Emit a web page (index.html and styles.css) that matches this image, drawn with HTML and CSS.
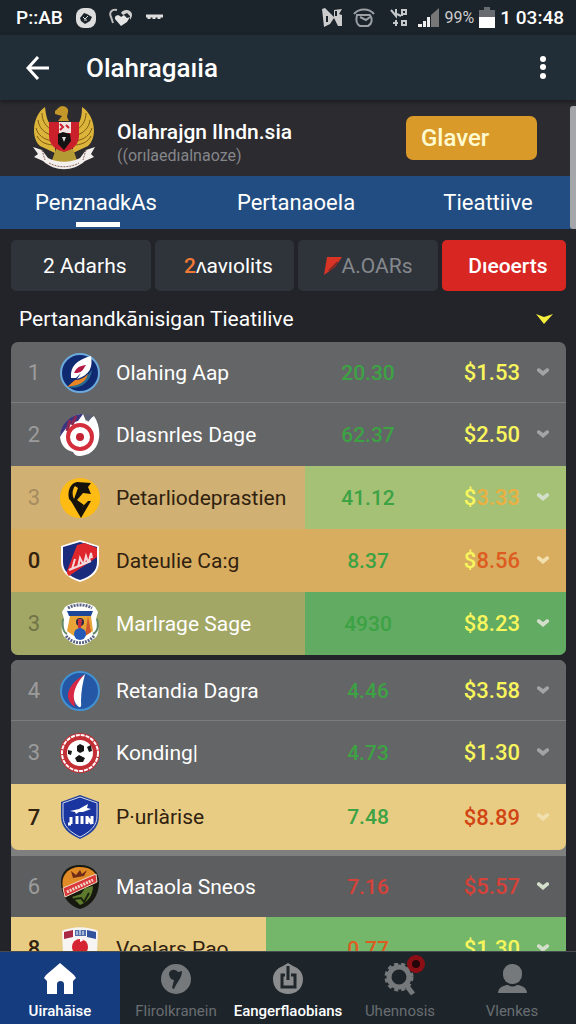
FILE: index.html
```html
<!DOCTYPE html>
<html lang="id">
<head>
    <meta charset="UTF-8">
    <meta name="viewport" content="width=device-width, initial-scale=1.0">
    <title>Olahragaıia</title>
    <link rel="stylesheet" href="styles.css">
</head>
<body>
    <div class="status-bar">
        <span class="status-clock">P::AB</span>
        <svg width="20" height="20" viewBox="0 0 20 20"><rect width="20" height="20" rx="8" fill="#ddd"/><path d="M4 10l4-5 3 1 5 3-2 4-5 3-4-3z" fill="#1c242b"/><path d="M7 9l2 2 3-3M8 12h3" stroke="#ddd" fill="none"/></svg>
        <svg width="24" height="20" viewBox="0 0 24 20"><path d="M8 2C2 1 0 5 2 9l2 6" stroke="#bbb" stroke-width="2" fill="none"/><path d="M12 18L6 11c-1-4 4-5 6-2l3-2 3 3 3-1-3 5z" fill="#e4e4e4"/><path d="M12 5c3-5 11-3 11 2 0 2-1 3-2 5V8l-3-3-4 2z" fill="#d0d0d0"/></svg>
        <svg width="17" height="8" viewBox="0 0 17 8"><path d="M0 2h17M3 2v3M8 2v3M13 2v3" stroke="#ddd" stroke-width="3" fill="none"/></svg>
        <div class="status-right">
            <svg width="21" height="20" viewBox="0 0 21 20"><path d="M0 1l3-1 9 9V2l8-1-3 5 3 1v11h-4l-4-8-4 6-6 3z" fill="#ccc"/><path d="M5 8v6M14 8V3" stroke="#1c242b" stroke-width="2"/></svg>
            <svg class="status-gap" width="22" height="20" viewBox="0 0 22 20"><path d="M1 6c5-6 15-6 20 0M4 7h13c3 4 2 9-2 11H7c-4-2-4-7-3-11zM7 9l6 3 4-3" stroke="#9a9fa3" stroke-width="2" fill="none"/></svg>
            <svg class="status-gap" width="18" height="20" viewBox="0 0 18 20"><path d="M1 2l5 6V1M7 6l4 2M12 1v7M12 2h4v4h-4M6 12v6M3 15h5M12 13v4h4v-4z" stroke="#c5c8ca" stroke-width="2" fill="none"/></svg>
            <svg width="22" height="20" viewBox="0 0 22 20"><path d="M0 19h4v-3H0zM5 19h3v-6H5zM9 19h3V9H9z" fill="#eee"/><path d="M13 19V7l8-7v19z" fill="#777"/></svg>
            <span class="status-percent">99%</span>
            <svg width="16" height="21" viewBox="0 0 16 21"><path d="M5 0h6v3h5v7H0V3h5z" fill="#686c70"/><path d="M0 10h16v11H0z" fill="#fff"/></svg>
            <span class="status-clock">1 03:48</span>
        </div>
    </div>

    <header class="app-bar">
        <button class="icon-button" type="button" aria-label="Kembali">
            <svg width="24" height="24" viewBox="0 0 24 24"><path d="M23 12H2M12 1L2 12l10 11" stroke="#fff" stroke-width="3" fill="none"/></svg>
        </button>
        <h1 class="app-title">Olahragaıia</h1>
        <button class="icon-button" type="button" aria-label="Menu">
            <svg width="8" height="24" viewBox="0 0 8 24"><g fill="#fff"><circle cx="4" cy="3" r="3"/><circle cx="4" cy="11" r="3"/><circle cx="4" cy="20" r="3"/></g></svg>
        </button>
    </header>

    <main class="content">
        <span class="scroll-thumb"></span>
        <section class="profile">
            <svg class="emblem" width="64" height="66" viewBox="0 0 64 66">
                <path d="M13 2C1 10-2 32 8 41l15 7V24C15 19 14 10 13 2zM50 2c13 8 16 30 6 39l-15 7V24c8-5 9-14 9-22z" fill="#dcb43a"/>
                <path d="M10 8c0 8 4 14 11 18M6 15c1 8 6 13 15 16M4 23c2 7 7 11 16 13M5 31c3 6 8 8 15 9M54 8c0 8-4 14-11 18M58 15c-1 8-6 13-15 16M60 23c-2 7-7 11-16 13M59 31c-3 6-8 8-15 9" stroke="#7d5e16" stroke-width="1" fill="none"/>
                <path d="M23 6c2-1 3-4 7-5 4 0 7 3 6 6l-1 5 2 4H26l4-5-7-2z" fill="#c39729"/>
                <path d="M24 44h17l5 14H19z" fill="#b49b33"/>
                <path d="M17 17h30v14c0 9-7 14-15 16-8-2-15-7-15-16z" fill="#c9202b"/>
                <path d="M27 17h12v11H27z" fill="#f1e4e0"/>
                <path d="M28 19l3 3-3 3M34 20l3 3" stroke="#c9202b" stroke-width="2" fill="none"/>
                <path d="M26 29l5-2 7 2 1 7-7 9-6-6z" fill="#151214"/>
                <path d="M30 32h4l-2 5z" fill="#ddd"/>
                <path d="M1 42l9 3 6 8c10 5 22 5 32 0l6-8 9-3-4 7 3 3-9 4c-12 11-30 11-42 0l-9-4 4-3z" fill="#f2efec"/>
                <path d="M17 58c9 5 21 5 30 0M10 45l3 10M54 45l-3 10" stroke="#8b625c" stroke-width="1" stroke-dasharray="2 1" fill="none"/>
            </svg>
            <div class="profile-text">
                <h2 class="profile-name">Olahrajgn lIndn.sia</h2>
                <p class="profile-sub">((orılaedıalnaoze)</p>
            </div>
            <button class="follow-button" type="button">Glaver</button>
        </section>

        <nav class="tabs">
            <button class="tab active" type="button">PenznadkAs</button>
            <button class="tab" type="button">Pertanaoela</button>
            <button class="tab" type="button">Tieattiive</button>
        </nav>

        <div class="filters">
            <button class="filter" type="button">2 Adarhs</button>
            <button class="filter" type="button"><span class="filter-count">2</span>ʌavıolits</button>
            <button class="filter muted" type="button"><svg width="18" height="18" viewBox="0 0 18 18"><path d="M3 0h15l-7 10-11 8z" fill="#d83426"/><path d="M5 14l9-9" stroke="#7c2925" stroke-width="2"/></svg>A.OARs</button>
            <button class="filter danger" type="button">Dıeoerts</button>
        </div>

        <div class="section-head">
            <h2 class="section-title">Pertanandkānisigan Tieatilive</h2>
            <button class="icon-button" type="button" aria-label="Pilih">
                <svg width="17" height="10" viewBox="0 0 17 10"><path d="M0 0l8 3 9-3-9 10z" fill="#f6ee3c"/></svg>
            </button>
        </div>

        <div class="card">
            <table class="ranking">
                <tr>
                    <td class="rank">1</td>
                    <td class="logo"><svg width="40" height="42" viewBox="0 0 40 42"><circle cx="20" cy="21" r="19" fill="#102a72" stroke="#6ca9dc" stroke-width="2"/><path d="M8 35c8 3 22-2 24-17l-9 11z" fill="#2b6d91"/><path d="M11 26c-1-12 6-18 20-22 2 11-1 19-14 23l4-6-5 5z" fill="#fff"/><path d="M14 21c3-7 7-7 12-8-3 4-3 7-9 8z" fill="#b41846"/><path d="M7 35l8-7c5 0 9-2 13-6-3 10-10 11-21 13z" fill="#e98324"/></svg></td>
                    <td class="name">Olahing Aap</td>
                    <td class="value">20.30</td>
                    <td class="price">$1.53</td>
                    <td class="more"><button class="icon-button" type="button" aria-label="Detail"><svg class="chevron" viewBox="0 0 12 9"><path d="M0 1l2-1 4 3 4-3 2 1v2L6 8 0 3z"/></svg></button></td>
                </tr>
                <tr>
                    <td class="rank">2</td>
                    <td class="logo"><svg width="40" height="42" viewBox="0 0 40 42"><path d="M0 23C2 8 12 0 23 0l3 7 8-5c9 13 7 35-9 39-7 2-10 1-12-3C5 36 1 31 0 23z" fill="#fff"/><path d="M0 23C1 8 12 0 23 0l-5 7C9 9 5 15 0 23z" fill="#39357f"/><path d="M10 6L7 17M16 2l-4 9" stroke="#8b2854" stroke-width="3"/><path d="M24 0l9 2-5 6z" fill="#596074"/><circle cx="20" cy="23" r="12" fill="none" stroke="#d42e3d" stroke-width="4"/><circle cx="20" cy="23" r="4" fill="#c42132"/></svg></td>
                    <td class="name">Dlasnrles Dage</td>
                    <td class="value">62.37</td>
                    <td class="price">$2.50</td>
                    <td class="more"><button class="icon-button" type="button" aria-label="Detail"><svg class="chevron" viewBox="0 0 12 9"><path d="M0 1l2-1 4 3 4-3 2 1v2L6 8 0 3z"/></svg></button></td>
                </tr>
                <tr class="row-tan">
                    <td class="rank">3</td>
                    <td class="logo"><svg width="40" height="42" viewBox="0 0 40 42"><circle cx="20" cy="21" r="20" fill="#fdbb13"/><path d="M9 22c-2-9 2-16 8-17l14 1-3 4 3 7-8-1-6 7 7 5-3 4-9-7z" fill="#15120c"/><path d="M15 9c-3 4-3 9-1 13l4-11z" fill="#fdbb13"/><path d="M11 24h6l4 7 7-7h3L21 41z" fill="#15120c"/></svg></td>
                    <td class="name">Petarliodeprastien</td>
                    <td class="value">41.12</td>
                    <td class="price">$<span class="amber">3.33</span></td>
                    <td class="more"><button class="icon-button" type="button" aria-label="Detail"><svg class="chevron light" viewBox="0 0 12 9"><path d="M0 1l2-1 4 3 4-3 2 1v2L6 8 0 3z"/></svg></button></td>
                </tr>
                <tr class="row-orange">
                    <td class="rank">0</td>
                    <td class="logo"><svg width="40" height="44" viewBox="0 0 40 44"><path d="M20 1l19 6v16c0 9-6 16-19 20C7 39 1 32 1 23V7z" fill="#fff"/><path d="M20 3l17 5v15c0 8-5 14-17 18C8 37 3 31 3 23V8z" fill="#1b2c7d"/><path d="M17 6l8-2 12 5v9L9 37c-3-3-2-5-2-5z" fill="#df262c"/><path d="M12 30l3-10M18 28l2-9 3 6M24 25l2-8 2 6M29 22l2-8 1 5M9 31l22-9" stroke="#f4d9dc" stroke-width="2" fill="none"/></svg></td>
                    <td class="name">Dateulie Ca:g</td>
                    <td class="value">8.37</td>
                    <td class="price">$<span class="orange">8.56</span></td>
                    <td class="more"><button class="icon-button" type="button" aria-label="Detail"><svg class="chevron cream" viewBox="0 0 12 9"><path d="M0 1l2-1 4 3 4-3 2 1v2L6 8 0 3z"/></svg></button></td>
                </tr>
                <tr class="row-green">
                    <td class="rank">3</td>
                    <td class="logo"><svg width="40" height="44" viewBox="0 0 40 44"><path d="M5 5c8-6 22-6 30 0l3 5-2 7c4 10 3 18-4 21-7 7-17 7-24 0-7-4-8-12-4-21l-2-7z" fill="#fff"/><path d="M8 6c7-4 17-4 24 0M6 34c8 9 20 9 28 0" stroke="#5d6587" stroke-width="3" stroke-dasharray="2 1" fill="none"/><path d="M7 9h26l-2 5H9z" fill="#1c4698"/><path d="M10 14h21l2 15-8 5H14l-7-5z" fill="#e8a437"/><path d="M28 14l3 16-6 4z" fill="#cf592c"/><path d="M3 17c-1 8 0 13 4 15M37 17c2 8 0 13-4 15" stroke="#638a69" stroke-width="2" fill="none"/><circle cx="20" cy="32" r="6" fill="#2459b8"/><circle cx="20" cy="20" r="4" fill="#292b45"/><path d="M18 17h4l-1 9h-3z" fill="#c93140"/></svg></td>
                    <td class="name">Marlrage Sage</td>
                    <td class="value">4930</td>
                    <td class="price">$8.23</td>
                    <td class="more"><button class="icon-button" type="button" aria-label="Detail"><svg class="chevron light" viewBox="0 0 12 9"><path d="M0 1l2-1 4 3 4-3 2 1v2L6 8 0 3z"/></svg></button></td>
                </tr>
            </table>
        </div>

        <div class="card-stack">
            <div class="card">
                <table class="ranking">
                    <tr>
                        <td class="rank">4</td>
                        <td class="logo"><svg width="40" height="42" viewBox="0 0 40 42"><circle cx="20" cy="21" r="19" fill="#2458a6" stroke="#4291d0" stroke-width="2"/><path d="M25 4C8 14 2 28 15 37c-2-12 2-25 10-33z" fill="#d62946"/><path d="M25 4C15 14 9 29 19 37c3 1 2-3 2-6 0-10 2-19 4-27z" fill="#fff"/></svg></td>
                        <td class="name">Retandia Dagra</td>
                        <td class="value">4.46</td>
                        <td class="price">$3.58</td>
                        <td class="more"><button class="icon-button" type="button" aria-label="Detail"><svg class="chevron" viewBox="0 0 12 9"><path d="M0 1l2-1 4 3 4-3 2 1v2L6 8 0 3z"/></svg></button></td>
                    </tr>
                    <tr>
                        <td class="rank">3</td>
                        <td class="logo"><svg width="40" height="42" viewBox="0 0 40 42"><circle cx="20" cy="21" r="20" fill="#c42e35"/><circle cx="20" cy="21" r="18" fill="none" stroke="#fff" stroke-width="2" stroke-dasharray="4 1"/><circle cx="20" cy="21" r="13" fill="#fff"/><path d="M17 14l3-2 4 2v5l-4 2-3-2zM27 15l4-2 1 6-3 1zM8 18l4 1-1 4-3-1zM15 26l4-3 6 3-2 4h-6z" fill="#151515"/></svg></td>
                        <td class="name">Konding|</td>
                        <td class="value">4.73</td>
                        <td class="price">$1.30</td>
                        <td class="more"><button class="icon-button" type="button" aria-label="Detail"><svg class="chevron" viewBox="0 0 12 9"><path d="M0 1l2-1 4 3 4-3 2 1v2L6 8 0 3z"/></svg></button></td>
                    </tr>
                    <tr class="row-sand">
                        <td class="rank">7</td>
                        <td class="logo"><svg width="40" height="44" viewBox="0 0 40 44"><path d="M20 0l19 7v14c0 12-8 18-19 23C9 39 1 33 1 21V7z" fill="#23409b"/><path d="M20 2l17 6v13c0 10-7 16-17 21C10 37 3 31 3 21V8z" fill="#1a35a0" stroke="#cbd7ee"/><path d="M10 16l9-2 9-5-1 4 4 1-8 3h-4l-3 2-1-2z" fill="#fff"/><path d="M11 22v7M8 29h3M17 21v8M22 21v8M27 21v8M32 21v8M27 22l5 7" stroke="#fff" stroke-width="3" fill="none"/></svg></td>
                        <td class="name">P·urlàrise</td>
                        <td class="value">7.48</td>
                        <td class="price red">$8.89</td>
                        <td class="more"><button class="icon-button" type="button" aria-label="Detail"><svg class="chevron cream" viewBox="0 0 12 9"><path d="M0 1l2-1 4 3 4-3 2 1v2L6 8 0 3z"/></svg></button></td>
                    </tr>
                </table>
            </div>
            <table class="ranking dark">
                <tr>
                    <td class="rank">6</td>
                    <td class="logo"><svg width="40" height="44" viewBox="0 0 40 44"><path d="M20 0c12 0 19 7 19 17 0 13-7 24-19 27C8 41 1 30 1 17 1 7 8 0 20 0z" fill="#17180f"/><path d="M20 2c9 0 15 4 16 9L3 23C0 10 9 2 20 2z" fill="#e18b27"/><path d="M11 6l5 4 4-5 2 4 5-4-3 6-11 2z" fill="#6d2b18"/><path d="M3 23L36 9l1 8L5 32z" fill="#d9393a" stroke="#efdcc4"/><path d="M7 27l26-12" stroke="#f1d8cb" stroke-width="3" stroke-dasharray="2 1"/><path d="M12 32l9-3 4-6 8-2c0 9-5 16-13 19z" fill="#5d7a2d"/><path d="M14 34l7-1 3 4 5-9" stroke="#1b240f" stroke-width="2" fill="none"/></svg></td>
                    <td class="name">Mataola Sneos</td>
                    <td class="value down">7.16</td>
                    <td class="price down">$5.57</td>
                    <td class="more"><button class="icon-button" type="button" aria-label="Detail"><svg class="chevron light" viewBox="0 0 12 9"><path d="M0 1l2-1 4 3 4-3 2 1v2L6 8 0 3z"/></svg></button></td>
                </tr>
                <tr class="row-split">
                    <td class="rank">8</td>
                    <td class="logo"><svg width="40" height="44" viewBox="0 0 40 44"><path d="M2 4c12-5 24-5 36 0l-1 22c-1 8-7 14-17 18C10 40 4 34 3 26z" fill="#f7f4f4"/><path d="M4 5l9-2v7l-9 2z" fill="#a92843"/><path d="M15 3h11v6H15z" fill="#506dab"/><path d="M17 4v4M20 3v5M23 4v4" stroke="#fff"/><path d="M27 3l9 2v7l-9-2z" fill="#32529c"/><circle cx="20" cy="20" r="8" fill="#d62532"/><path d="M20 11l4 2-4 2z" fill="#fff"/></svg></td>
                    <td class="name">Voalars Pao</td>
                    <td class="value orange">0.77</td>
                    <td class="price">$1.30</td>
                    <td class="more"><button class="icon-button" type="button" aria-label="Detail"><svg class="chevron light" viewBox="0 0 12 9"><path d="M0 1l2-1 4 3 4-3 2 1v2L6 8 0 3z"/></svg></button></td>
                </tr>
            </table>
        </div>
    </main>

    <nav class="bottom-nav">
        <a class="nav-item active" href="#">
            <svg width="32" height="32" viewBox="0 0 32 32"><path d="M16 0l14 12 2 3-3 3v13h-9V21c0-4-7-4-7 0v10H3V18l-3-3 2-3z" fill="#fff"/></svg>
            <span>Uirahāise</span>
        </a>
        <a class="nav-item" href="#">
            <svg width="32" height="32" viewBox="0 0 32 32"><circle cx="16" cy="16" r="15" fill="#76797b"/><path d="M9 10c2-4 6-4 9-1l4-1c0 7-5 11-8 18l-2-1 2-8c-3 0-5-3-5-7z" fill="#20282e"/></svg>
            <span>Flirolkranein</span>
        </a>
        <a class="nav-item bright" href="#">
            <svg width="32" height="32" viewBox="0 0 32 32"><path d="M16 0l5 3c6 2 10 7 10 13 0 20-30 20-30 0C1 10 5 5 11 3z" fill="#8a8c8d"/><path d="M16 3v14M13 12h-3v12h13V12h-4" stroke="#1f272d" stroke-width="3" fill="none"/></svg>
            <span>Eangerflaobians</span>
        </a>
        <a class="nav-item" href="#">
            <span class="nav-icon">
                <svg width="32" height="32" viewBox="0 0 32 32"><circle cx="15" cy="14" r="10" fill="none" stroke="#76797b" stroke-width="5"/><circle cx="15" cy="14" r="13" fill="none" stroke="#76797b" stroke-width="3" stroke-dasharray="4 3"/><path d="M22 22l7 9" stroke="#76797b" stroke-width="5"/></svg>
                <span class="badge"></span>
            </span>
            <span>Uhennosis</span>
        </a>
        <a class="nav-item" href="#">
            <svg width="32" height="32" viewBox="0 0 32 32"><rect x="7" y="1" width="19" height="20" rx="9" fill="#76797b"/><path d="M2 30c0-6 7-8 10-8 3 2 6 2 9 0 3 0 10 2 10 8z" fill="#76797b"/></svg>
            <span>Vlenkes</span>
        </a>
    </nav>
</body>
</html>
```

FILE: styles.css
```css
* {
    box-sizing: border-box;
}
body {
    display: flex;
    flex-direction: column;
    height: 100vh;
    margin: 0;
    font-family: Roboto, "Liberation Sans", sans-serif;
    color: #fff;
    background-color: #232429;
}
h1, h2, p {
    margin: 0;
}
button {
    border: none;
    padding: 0;
    font-family: inherit;
    color: inherit;
    background: none;
    cursor: pointer;
}
svg {
    display: block;
    flex: none;
}
.icon-button {
    display: flex;
    align-items: center;
    justify-content: center;
}

/* status bar */
.status-bar {
    display: flex;
    flex: none;
    align-items: center;
    gap: 13px;
    height: 35px;
    padding: 0 12px 0 16px;
    background-color: #1b232b;
}
.status-clock {
    font-size: 19px;
    font-weight: 500;
}
.status-right {
    display: flex;
    align-items: center;
    gap: 5px;
    margin-left: auto;
}
.status-gap {
    margin: 0 5px;
}
.status-percent {
    font-size: 16px;
    color: #ccc;
}

/* title bar */
.app-bar {
    display: flex;
    flex: none;
    align-items: center;
    height: 65px;
    padding: 0 29px 0 26px;
    background-color: #222e37;
    box-shadow: 0 2px 4px rgba(0, 0, 0, 0.4);
    z-index: 1;
}
.app-title {
    flex: 1;
    margin-left: 36px;
    font-size: 26px;
    font-weight: 500;
}

.content {
    position: relative;
    flex: 1;
    min-height: 0;
    overflow-y: auto;
    scrollbar-width: none;
}
.scroll-thumb {
    position: absolute;
    top: 6px;
    right: 0;
    width: 6px;
    height: 123px;
    border-radius: 3px 0 0 3px;
    background-color: #a5a6a9;
}

/* profile */
.profile {
    display: flex;
    align-items: center;
    height: 76px;
    padding: 0 39px 0 32px;
    background-color: #2c2b30;
}
.profile-text {
    flex: 1;
    margin-left: 21px;
    padding-top: 10px;
}
.profile-name {
    font-size: 21px;
    font-weight: 500;
    line-height: 26px;
}
.profile-sub {
    font-size: 16px;
    line-height: 22px;
    color: #85868a;
}
.follow-button {
    width: 131px;
    height: 44px;
    padding-left: 15px;
    border-radius: 7px;
    font-size: 24px;
    font-weight: 500;
    text-align: left;
    color: #fffbd0;
    background-color: #da9a2a;
}

/* tabs */
.tabs {
    display: grid;
    grid-template-columns: 12fr 13fr 11fr;
    height: 53px;
    background-color: #214d82;
}
.tab {
    position: relative;
    font-size: 22px;
}
.tab.active::after {
    content: "";
    position: absolute;
    left: 50%;
    bottom: 2px;
    width: 44px;
    height: 5px;
    margin-left: -20px;
    background-color: #fff;
}

/* filters */
.filters {
    display: grid;
    grid-template-columns: 9fr 9fr 9fr 8fr;
    gap: 4px;
    padding: 11px 10px 0 11px;
}
.filter {
    display: flex;
    align-items: center;
    justify-content: center;
    height: 51px;
    padding-left: 8px;
    border-radius: 5px;
    font-size: 21px;
    background-color: #2f343b;
}
.filter-count {
    font-weight: 500;
    color: #f07a35;
}
.filter.muted {
    padding-left: 0;
    color: #85888c;
}
.filter.danger {
    font-weight: 500;
    background-color: #d82623;
}
.section-head {
    display: flex;
    align-items: center;
    justify-content: space-between;
    height: 51px;
    padding: 4px 23px 0 19px;
}
.section-title {
    font-size: 21px;
    font-weight: 400;
}

/* ranking */
.card, .card-stack {
    margin: 0 10px 0 11px;
    border-radius: 7px;
    overflow: hidden;
    background-color: #646566;
}
.card-stack {
    margin-top: 5px;
    background-color: #7e7f7f;
}
.card-stack .card {
    margin: 0 0 6px;
}
.ranking {
    width: 100%;
    table-layout: fixed;
    border-collapse: collapse;
    font-size: 21px;
}
.ranking tr {
    height: 63px;
}
.ranking tr:first-child {
    height: 61px;
    box-shadow: inset 0 -1px #7b7c7d;
}
.ranking td {
    padding: 0;
    vertical-align: middle;
}
.ranking.dark {
    background-color: #5d5e60;
}
.ranking.dark tr:first-child {
    box-shadow: none;
}
.ranking .rank {
    width: 46px;
    font-size: 22px;
    text-align: center;
    color: #9c9c9c;
}
.ranking .logo {
    width: 46px;
    padding-left: 3px;
}
.ranking .name {
    padding-left: 13px;
    white-space: nowrap;
}
.ranking .value {
    width: 76px;
    text-align: center;
    font-weight: 500;
    color: #3ca244;
}
.ranking .price {
    width: 114px;
    font-size: 22px;
    text-align: right;
    font-weight: 500;
    color: #f8f65c;
}
.ranking .more {
    width: 46px;
}
.ranking .icon-button {
    width: 100%;
    height: 32px;
}
.chevron {
    width: 12px;
    height: 9px;
    fill: #a2a3a3;
}
.chevron.light {
    fill: #d3dfca;
}
.chevron.cream {
    fill: #f2dfae;
}
.ranking .row-tan {
    background: linear-gradient(to right, #d0b073 53%, #a5c176 53%);
}
.ranking .row-orange {
    background-color: #d9ad60;
}
.ranking .row-green {
    background: linear-gradient(to right, #a2a765 53%, #62ab62 53%);
}
.ranking .row-sand {
    height: 66px;
    background-color: #e9cc84;
}
.ranking .row-split {
    background: linear-gradient(to right, #e9cc84 46%, #74b76b 46%);
}
.row-tan .name, .row-orange .name, .row-sand .name, .row-split .name {
    color: #30220f;
}
.ranking .row-orange .rank, .ranking .row-sand .rank, .ranking .row-split .rank {
    font-weight: 500;
    color: #30220f;
}
.ranking .row-tan .rank {
    color: #a58b60;
}
.ranking .row-green .rank {
    color: #717449;
}
.amber {
    color: #eab040;
}
.ranking .orange {
    color: #dd5c20;
}
.ranking .red {
    color: #d14515;
}
.ranking .down {
    color: #d64238;
}

/* bottom navigation */
.bottom-nav {
    display: grid;
    flex: none;
    grid-template-columns: 120px repeat(4, 1fr);
    height: 73px;
    padding-right: 8px;
    border-top: 1px solid #454b50;
    background-color: #1d252b;
}
.nav-item {
    display: flex;
    flex-direction: column;
    align-items: center;
    gap: 5px;
    padding-top: 11px;
    font-size: 15px;
    line-height: 22px;
    text-decoration: none;
    color: #696d71;
}
.nav-item.active {
    font-weight: 500;
    color: #fff;
    background-color: #153c7f;
}
.nav-item.bright {
    font-weight: 500;
    color: #fff;
}
.nav-icon {
    position: relative;
}
.badge {
    position: absolute;
    top: -8px;
    right: -9px;
    width: 18px;
    height: 18px;
    border: 5px solid #8c0f16;
    border-radius: 50%;
    background-color: #240609;
}
```
